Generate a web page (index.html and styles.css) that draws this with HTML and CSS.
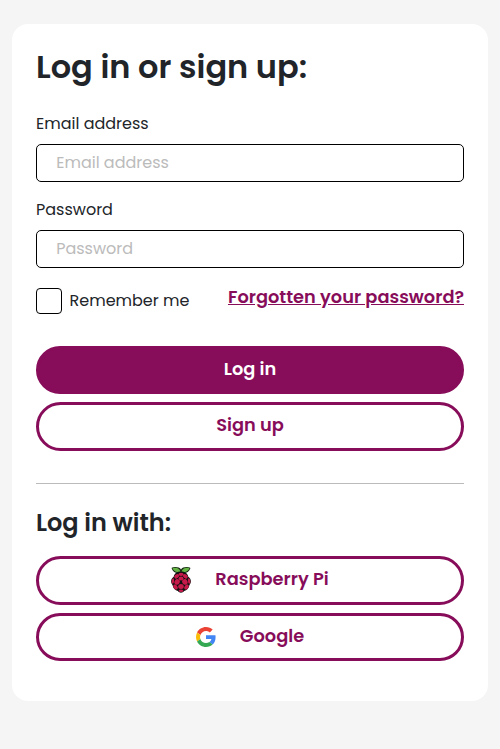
FILE: index.html
```html
<!DOCTYPE html>
<html lang="en">
<head>
<meta charset="utf-8">
<title>Log in or sign up</title>
<link rel="stylesheet" href="styles.css">
</head>
<body>
<main class="card">
  <h1 class="title">Log in or sign up:</h1>
  <form class="form">
    <label class="label" for="email">Email address</label>
    <input class="input" id="email" type="email" placeholder="Email address">
    <label class="label" for="password">Password</label>
    <input class="input" id="password" type="password" placeholder="Password">
    <div class="options">
      <label class="remember"><input class="checkbox" type="checkbox"><span>Remember me</span></label>
      <a class="forgot" href="#">Forgotten your password?</a>
    </div>
    <button class="button primary" type="button">Log in</button>
    <button class="button" type="button">Sign up</button>
  </form>
  <hr class="rule">
  <h2 class="subtitle">Log in with:</h2>
  <button class="button raspberry" type="button">
    <svg class="pi-icon" viewBox="0 0 20 26">
      <path d="M10 5.2C7 7 2 6 .5 .9 3-.2 8.300-.5 10 2.500 11.700-.5 17-.2 19.500 .9 18 6 13 7 10 5.200Z" fill="#172b13"/>
      <path d="M9.500 5C6.500 6 2.800 4.700 1.500 1.200 5.500.2 8.700 1.300 9.500 5ZM10.500 5C13.500 6 17.200 4.700 18.500 1.200 14.500.2 11.300 1.300 10.500 5Z" fill="#63b345"/>
      <path d="M10 4.500C13.500 4.500 16.800 6.200 17.300 9.700 20.200 11.500 20.700 15.500 18.500 18 18 21.200 15.800 23.500 13.200 24.100 11.500 26.200 8.500 26.200 6.800 24.100 4.200 23.500 2 21.200 1.500 18-.7 15.500-.2 11.500 2.700 9.700 3.200 6.200 6.500 4.500 10 4.500Z" fill="#111"/>
      <g fill="#c51a4a">
        <ellipse cx="10" cy="7.300" rx="2.600" ry="1.600"/>
        <ellipse cx="5.700" cy="9.300" rx="2.700" ry="1.900" transform="rotate(-38 5.700 9.300)"/>
        <ellipse cx="14.300" cy="9.300" rx="2.700" ry="1.900" transform="rotate(38 14.300 9.300)"/>
        <ellipse cx="10" cy="11.500" rx="2.500" ry="1.900"/>
        <ellipse cx="6.100" cy="14.900" rx="2.600" ry="2.900" transform="rotate(35 6.100 14.900)"/>
        <ellipse cx="13.900" cy="14.900" rx="2.600" ry="2.900" transform="rotate(-35 13.900 14.900)"/>
        <ellipse cx="1.900" cy="14" rx="1.200" ry="2.700" transform="rotate(8 1.900 14)"/>
        <ellipse cx="18.100" cy="14" rx="1.200" ry="2.700" transform="rotate(-8 18.100 14)"/>
        <ellipse cx="10" cy="19.400" rx="2.800" ry="2.500"/>
        <ellipse cx="4.500" cy="20" rx="1.900" ry="2.800" transform="rotate(-32 4.500 20)"/>
        <ellipse cx="15.500" cy="20" rx="1.900" ry="2.800" transform="rotate(32 15.500 20)"/>
        <ellipse cx="10" cy="23.800" rx="2.300" ry="1.200"/>
      </g>
    </svg>
    <span>Raspberry Pi</span>
  </button>
  <button class="button google" type="button">
    <svg class="g-icon" viewBox="0 0 48 48">
      <path fill="#EA4335" d="M24 9.500c3.540 0 6.710 1.220 9.210 3.600l6.850-6.850C35.900 2.380 30.470 0 24 0 14.620 0 6.510 5.380 2.560 13.220l7.980 6.190C12.430 13.720 17.740 9.500 24 9.500z"/>
      <path fill="#4285F4" d="M46.980 24.550c0-1.570-.15-3.090-.38-4.550H24v9.020h12.940c-.58 2.960-2.260 5.480-4.780 7.180l7.730 6c4.510-4.180 7.090-10.360 7.090-17.650z"/>
      <path fill="#FBBC05" d="M10.530 28.590c-.48-1.450-.76-2.990-.76-4.590s.27-3.140.76-4.590l-7.980-6.190C.92 16.460 0 20.120 0 24c0 3.880.92 7.540 2.560 10.780l7.970-6.190z"/>
      <path fill="#34A853" d="M24 48c6.480 0 11.930-2.130 15.890-5.810l-7.730-6c-2.150 1.450-4.920 2.300-8.160 2.300-6.260 0-11.570-4.220-13.470-9.910l-7.980 6.190C6.510 42.620 14.620 48 24 48z"/>
    </svg>
    <span>Google</span>
  </button>
</main>
</body>
</html>
```
FILE: styles.css
```css
* { box-sizing: border-box; }
body {
  margin: 0;
  padding: 24px 12px 48px;
  background: #f5f5f5;
  color: #212529;
  font: 400 16px/24px Poppins, Inter, sans-serif;
}
.card {
  height: 677px;
  padding: 24px;
  border-radius: 16px;
  background: #fff;
}
.title {
  margin: 0 0 26px;
  font-size: 32px;
  font-weight: 600;
  line-height: 38px;
  white-space: nowrap;
}
.form { display: flex; flex-direction: column; }
.label { height: 24px; margin-bottom: 8px; white-space: nowrap; }
.input {
  width: 100%;
  height: 38px;
  margin: 0 0 16px;
  padding: 0 19.200px 1px;
  border: 1px solid #000;
  border-radius: 5px;
  background: #fff;
  color: #212529;
  font-family: inherit;
  font-size: 16px;
}
.input::placeholder { color: #bbb; opacity: 1; }
.options {
  display: flex;
  justify-content: space-between;
  align-items: flex-start;
  height: 62px;
  padding-top: 4px;
}
.remember { display: flex; align-items: center; gap: 7.500px; height: 26px; white-space: nowrap; }
.checkbox {
  appearance: none;
  width: 26px;
  height: 26px;
  margin: 0;
  border: 1px solid #000;
  border-radius: 4px;
}
.forgot {
  color: #870c59;
  font-size: 17.800px;
  font-weight: 600;
  line-height: 18px;
  white-space: nowrap;
}
.button {
  display: flex;
  align-items: center;
  justify-content: center;
  width: 100%;
  height: 49px;
  margin: 0;
  padding: 0 0 4px;
  border: 3px solid #870c59;
  border-radius: 25px;
  background: #fff;
  color: #870c59;
  font-family: inherit;
  font-size: 17.800px;
  font-weight: 600;
  line-height: 26px;
  white-space: nowrap;
}
.primary { height: 48px; margin-bottom: 8px; padding-bottom: 2px; background: #870c59; color: #fff; }
.rule { height: 1px; margin: 32px 0 24px; border: 0; background: #bbb; }
.subtitle {
  margin: 0 0 18px;
  font-size: 24px;
  font-weight: 600;
  line-height: 30px;
}
.raspberry { margin-bottom: 8px; gap: 24px; }
.google { height: 48px; padding-bottom: 2px; gap: 24px; }
.pi-icon { width: 20px; height: 26px; margin-top: 3px; }
.g-icon { width: 20px; height: 20px; margin-top: 2px; }
```
